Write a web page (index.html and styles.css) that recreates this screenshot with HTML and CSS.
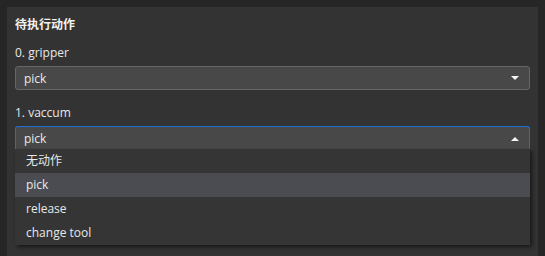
FILE: index.html
```html
<!DOCTYPE html>
<html lang="zh-CN">

<head>
  <meta charset="UTF-8">
  <title>待执行动作</title>
  <link rel="stylesheet" href="styles.css">
</head>

<body>
  <div class="panel">
    <h3 class="title">待执行动作</h3>

    <div class="field first">
      <div class="label">0. gripper</div>
      <div class="select">
        <span>pick</span>
        <span class="arrow down"></span>
      </div>
    </div>

    <div class="field">
      <div class="label">1. vaccum</div>
      <div class="combo">
        <div class="select open">
          <span>pick</span>
          <span class="arrow up"></span>
        </div>
        <ul class="menu">
          <li>无动作</li>
          <li class="active">pick</li>
          <li>release</li>
          <li>change tool</li>
        </ul>
      </div>
    </div>
  </div>
</body>

</html>
```

FILE: styles.css
```css
body {
  margin: 0;
  background-color: #262626;
  font-family: "Open Sans", "Noto Sans CJK SC", sans-serif;
  font-size: 12px;
  color: #e8e8e8;
  height: 256px;
  overflow: hidden;
}

.panel {
  margin: 7px 7px 0 7px;
  height: 249px;
  background-color: #333333;
  padding: 10px 8px 0 8px;
  box-sizing: border-box;
}

.title {
  margin: 0;
  font-size: 12px;
  font-weight: bold;
  line-height: 16px;
  color: #f2f2f2;
}

.field {
  margin-top: 15px;
}

.field.first {
  margin-top: 12px;
}

.label {
  line-height: 16px;
  margin-bottom: 5px;
}

.select {
  height: 24px;
  box-sizing: border-box;
  border: 1px solid #666666;
  border-radius: 3px;
  background-color: #484848;
  padding: 0 10px 0 8px;
  display: flex;
  align-items: center;
  justify-content: space-between;
}

.select.open {
  border-color: #1f6fd1;
  border-bottom: none;
  border-radius: 3px 3px 0 0;
  height: 23px;
  padding-top: 1px;
}

.arrow {
  width: 0;
  height: 0;
  border-left: 4px solid transparent;
  border-right: 4px solid transparent;
}

.arrow.down {
  border-top: 4px solid #f4f4f4;
}

.arrow.up {
  border-bottom: 4px solid #f4f4f4;
}

.combo {
  position: relative;
}

.menu {
  position: absolute;
  left: 0;
  right: 0;
  top: 23px;
  margin: 0;
  padding: 0;
  list-style: none;
  background-color: #353535;
  box-shadow: 2px 2px 4px rgba(0, 0, 0, 0.55);
}

.menu li {
  height: 24px;
  line-height: 24px;
  padding-left: 11px;
}

.menu li.active {
  background-color: #4b4c52;
}
```
